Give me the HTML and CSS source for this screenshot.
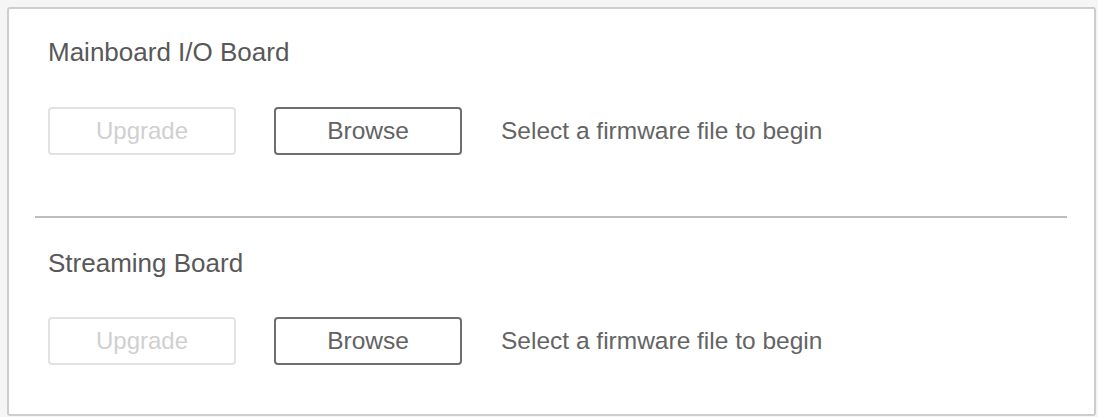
FILE: index.html
```html
<!DOCTYPE html>
<html lang="en">
<head>
<meta charset="utf-8">
<title>Firmware Upgrade</title>
<link rel="stylesheet" href="styles.css">
</head>
<body>
  <div class="card">
    <section class="board board--first">
      <h2 class="board__title">Mainboard I/O Board</h2>
      <div class="board__actions">
        <button class="btn btn--disabled" disabled>Upgrade</button>
        <button class="btn btn--browse">Browse</button>
        <span class="board__status">Select a firmware file to begin</span>
      </div>
    </section>
    <hr class="divider">
    <section class="board board--last">
      <h2 class="board__title">Streaming Board</h2>
      <div class="board__actions">
        <button class="btn btn--disabled" disabled>Upgrade</button>
        <button class="btn btn--browse">Browse</button>
        <span class="board__status">Select a firmware file to begin</span>
      </div>
    </section>
  </div>
</body>
</html>
```

FILE: styles.css
```css
html, body {
  margin: 0;
  padding: 0;
}

body {
  background: #f5f5f5;
  font-family: "Liberation Sans", Arial, sans-serif;
  color: #5c5c5c;
  padding: 7px 2px 2px 7px;
}

.card {
  background: #ffffff;
  border: 2px solid #cdcdcd;
  border-radius: 3px;
}

.board {
  padding-left: 39px;
}

.board--first {
  padding-top: 28px;
  padding-bottom: 61px;
}

.board--last {
  padding-top: 30px;
  padding-bottom: 49px;
}

.board__title {
  margin: 0 0 40px 0;
  font-size: 26px;
  font-weight: normal;
  line-height: 30px;
  color: #585858;
}

.board--last .board__title {
  margin-bottom: 39px;
}

.board__actions {
  display: flex;
  align-items: center;
  gap: 38px;
  height: 48px;
}

.btn {
  box-sizing: border-box;
  width: 188px;
  height: 48px;
  border-radius: 4px;
  background: #ffffff;
  font-family: "Liberation Sans", Arial, sans-serif;
  font-size: 24px;
  padding: 0;
}

.btn--disabled {
  border: 2px solid #e2e2e2;
  color: #d0d0d0;
}

.btn--browse {
  border: 2px solid #6e6e6e;
  color: #626262;
  font-size: 24.5px;
}

.board__status {
  font-size: 24.5px;
  color: #646464;
  padding-left: 1px;
}

.divider {
  margin: 0 27px 0 26px;
  border: 0;
  height: 2px;
  background: #bdbdbd;
}
```
